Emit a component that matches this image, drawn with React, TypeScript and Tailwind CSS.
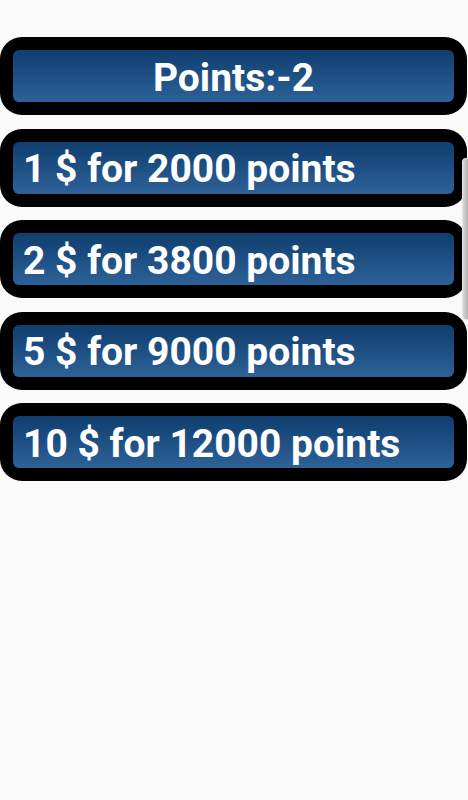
import React from "react";

const offers = [
  "1 $ for 2000 points",
  "2 $ for 3800 points",
  "5 $ for 9000 points",
  "10 $ for 12000 points",
];

const Tile = ({ label, center }: { label: string; center?: boolean }) => (
  <div className="h-[78px] mr-[1px] rounded-[22px] bg-black p-[13px]">
    <div
      className={`h-full rounded-[6px] bg-gradient-to-b from-[#0f3e6f] to-[#2d6298] flex items-center pt-[4px] ${
        center ? "justify-center" : "justify-start pl-[10px]"
      }`}
    >
      <span className="text-white font-bold text-[39px] leading-none whitespace-nowrap">
        {label}
      </span>
    </div>
  </div>
);

export default function App() {
  return (
    <div
      className="relative w-[468px] h-[800px] bg-[#fafafa] overflow-hidden"
      style={{ fontFamily: "Roboto, 'Liberation Sans', sans-serif" }}
    >
      <div className="flex flex-col gap-[13.5px] pt-[37px]">
        <Tile label="Points:-2" center />
        {offers.map((o) => (
          <Tile key={o} label={o} />
        ))}
      </div>

      {/* edge panel handle */}
      <div className="absolute right-0 top-[158px] w-[6px] h-[162px] rounded-l-[4px] border border-r-0 border-[#e4e4e4] bg-gradient-to-r from-[#d8d8d8] to-[#b4b4b4]" />
    </div>
  );
}
